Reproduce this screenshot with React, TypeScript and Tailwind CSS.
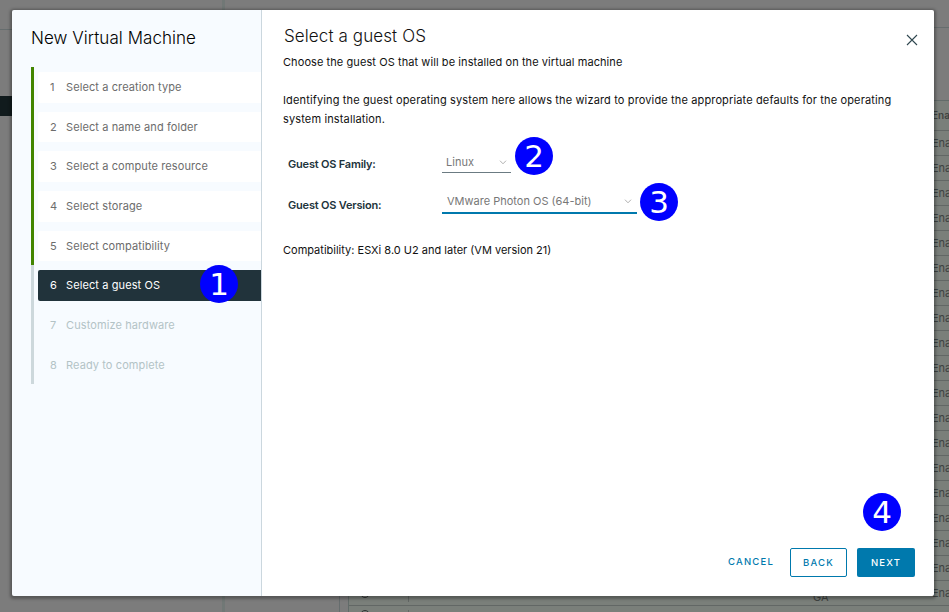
import type { ReactNode } from 'react';

type Step = { label: string; state: 'done' | 'current' | 'todo'; tracking: string };

const steps: Step[] = [
  { label: 'Select a creation type', state: 'done', tracking: 'tracking-[0.1px]' },
  { label: 'Select a name and folder', state: 'done', tracking: 'tracking-[0.1px]' },
  { label: 'Select a compute resource', state: 'done', tracking: 'tracking-[0.1px]' },
  { label: 'Select storage', state: 'done', tracking: 'tracking-[0.1px]' },
  { label: 'Select compatibility', state: 'done', tracking: 'tracking-[0.1px]' },
  { label: 'Select a guest OS', state: 'current', tracking: 'tracking-[0.1px]' },
  { label: 'Customize hardware', state: 'todo', tracking: 'tracking-[0.1px]' },
  { label: 'Ready to complete', state: 'todo', tracking: 'tracking-[0.1px]' },
];

const rowTone = {
  done: 'bg-white text-[#6c6c6c]',
  current: 'bg-[#21333b] text-white',
  todo: 'text-[#b3c3c6]',
};

const enabledRows = Array.from({ length: 19 }, (_, i) => i);

function Badge({ children, place }: { children: ReactNode; place: string }) {
  return (
    <span
      className={`absolute flex h-[38px] w-[38px] items-center justify-center rounded-full bg-[#0000ff] font-['DejaVu_Sans',sans-serif] text-[31px] leading-none text-white ${place}`}
    >
      {children}
    </span>
  );
}

function Chevron() {
  return (
    <svg width="8" height="5" viewBox="0 0 8 5" fill="none" stroke="#b0b0b0" strokeWidth="1">
      <path d="M1 0.7 4 3.8 7 0.7" />
    </svg>
  );
}

function Backdrop() {
  return (
    <div className="flex h-full text-[11px] text-[#3f4341]">
      <div className="flex w-[225px] flex-none flex-col border-r-[3px] border-[#717876]">
        <div className="h-[30px] border-b border-[#666d6e]" />
        <div className="mt-[66px] h-5 w-full bg-[#111b1d]" />
      </div>
      <div className="flex min-w-0 flex-1 flex-col">
        <div className="h-7 flex-none border-b border-[#666d6e]" />
        <div className="ml-[114px] flex min-h-0 flex-1 border-l border-[#666d6e] pt-[72px] pl-2">
          <div className="flex flex-1 flex-col border-t border-l border-[#626b69] bg-[#7a7f7a]">
            <div className="flex h-[30px] flex-none items-center justify-end border-b border-[#626765] font-semibold text-[10px]">
              <span className="w-[17px] overflow-hidden">Enabled</span>
            </div>
            {enabledRows.map((n) => (
              <div key={n} className="flex h-[25px] flex-none items-center justify-between border-b border-[#626765]">
                <span className="flex h-full items-center">
                  <span className="ml-[11px] h-[10px] w-[10px] rounded-full border border-[#303332]" />
                  <span className="ml-[38px] h-[18px] w-px bg-[#626765]" />
                </span>
                <span className={n === 18 ? 'mt-2 ml-[404px] flex-1' : 'hidden'}>GA</span>
                <span className="w-[17px] overflow-hidden">Enabled</span>
              </div>
            ))}
            <div className="flex h-[25px] flex-none items-start pt-[4px]">
              <span className="ml-[11px] h-[10px] w-[10px] flex-none rounded-full border border-[#303332]" />
              <span className="ml-[38px] h-[18px] w-px bg-[#626765]" />
              <span className="ml-[11px] whitespace-nowrap">Virtual machine Consolidation Needed status Virtual Machine</span>
            </div>
          </div>
        </div>
      </div>
    </div>
  );
}

function Sidebar() {
  return (
    <aside className="relative flex w-[250px] flex-none flex-col border-r border-[#cbd7de] bg-[#f7fbff]">
      <h1 className="mt-[17px] ml-[19px] text-[17px] leading-[23px] font-[350] tracking-[0.05px] text-black">New Virtual Machine</h1>
      <ol className="mt-[17px] ml-[19px]">
        {steps.map((s, i) => (
          <li
            key={s.label}
            className={`h-[39.67px] border-l-[3px] pt-[5px] pl-1 ${i < 5 ? 'border-[#428500]' : 'border-[#cdd8dc]'}`}
          >
            <div className={`flex h-[30.67px] items-center rounded-l-[2px] pl-3 text-[11px] ${rowTone[s.state]}`}>
              <span className="w-4">{i + 1}</span>
              <span className={`whitespace-nowrap ${s.tracking}`}>{s.label}</span>
            </div>
          </li>
        ))}
      </ol>
      <Badge place="top-[255px] left-[188px]">1</Badge>
    </aside>
  );
}

export default function App() {
  return (
    <div className="relative h-[612px] w-[949px] overflow-hidden bg-[#7c7c7c] font-['Inter',sans-serif]">
      <Backdrop />
      <div className="absolute top-[10px] left-[12px] flex h-[586px] w-[922px] overflow-hidden rounded-[2px] shadow-[0_1px_3px_2px_rgba(0,0,0,0.3)]">
        <Sidebar />
        <main className="relative flex min-w-0 flex-1 flex-col bg-white text-[11px] text-[#111]">
          <header className="flex items-start justify-between pr-4 pl-[22px]">
            <h2 className="mt-[15px] text-[17px] leading-[23px] font-[350] tracking-[0.1px] text-[#111]">Select a guest OS</h2>
            <svg className="mt-6" width="12" height="12" viewBox="0 0 12 12" stroke="#304850" strokeWidth="1.1">
              <path d="M1 1 11 11M11 1 1 11" />
            </svg>
          </header>
          <p className="mt-1 pl-[21px] leading-5 tracking-[0.08px]">Choose the guest OS that will be installed on the virtual machine</p>
          <p className="mt-[19px] pr-4 pl-[21px] leading-[19px] tracking-[0.14px]">
            Identifying the guest operating system here allows the wizard to provide the appropriate defaults for the operating
            <br />
            system installation.
          </p>
          <div className="mt-6 grid grid-cols-[154px_1fr] gap-y-[16px] pl-[26px]">
            <label className="pt-px leading-5 font-semibold text-[#21333b] tracking-[-0.2px]">Guest OS Family:</label>
            <div className="flex h-5 w-[69px] items-center justify-between border-b border-[#6b7b82] pr-1 pl-1 text-[#777]">
              Linux
              <Chevron />
            </div>
            <label className="pt-[5px] leading-5 font-semibold text-[#21333b] tracking-[-0.2px]">Guest OS Version:</label>
            <div className="flex h-6 w-[195px] items-center justify-between border-b-2 border-[#0079ad] pr-[5px] pl-[5px] text-[#777]">
              <span className="whitespace-nowrap">VMware Photon OS (64-bit)</span>
              <Chevron />
            </div>
          </div>
          <p className="mt-[25px] pl-[21px] leading-5">Compatibility: ESXi 8.0 U2 and later (VM version 21)</p>
          <footer className="mt-auto mb-[19px] flex items-center justify-end pr-[19px] text-[9.5px] font-medium tracking-[1.2px]">
            <button className="mr-4 text-[#0079ad]">CANCEL</button>
            <button className="mr-[10px] h-[29px] w-[57px] rounded-[2px] border border-[#0079ad] pt-px text-[#0079ad]">BACK</button>
            <button className="h-[29px] w-[58px] rounded-[2px] bg-[#0079ad] pt-px text-white">NEXT</button>
          </footer>
          <Badge place="top-[127px] left-[253px]">2</Badge>
          <Badge place="top-[173px] left-[378px]">3</Badge>
          <Badge place="top-[483px] left-[601px]">4</Badge>
        </main>
      </div>
    </div>
  );
}
